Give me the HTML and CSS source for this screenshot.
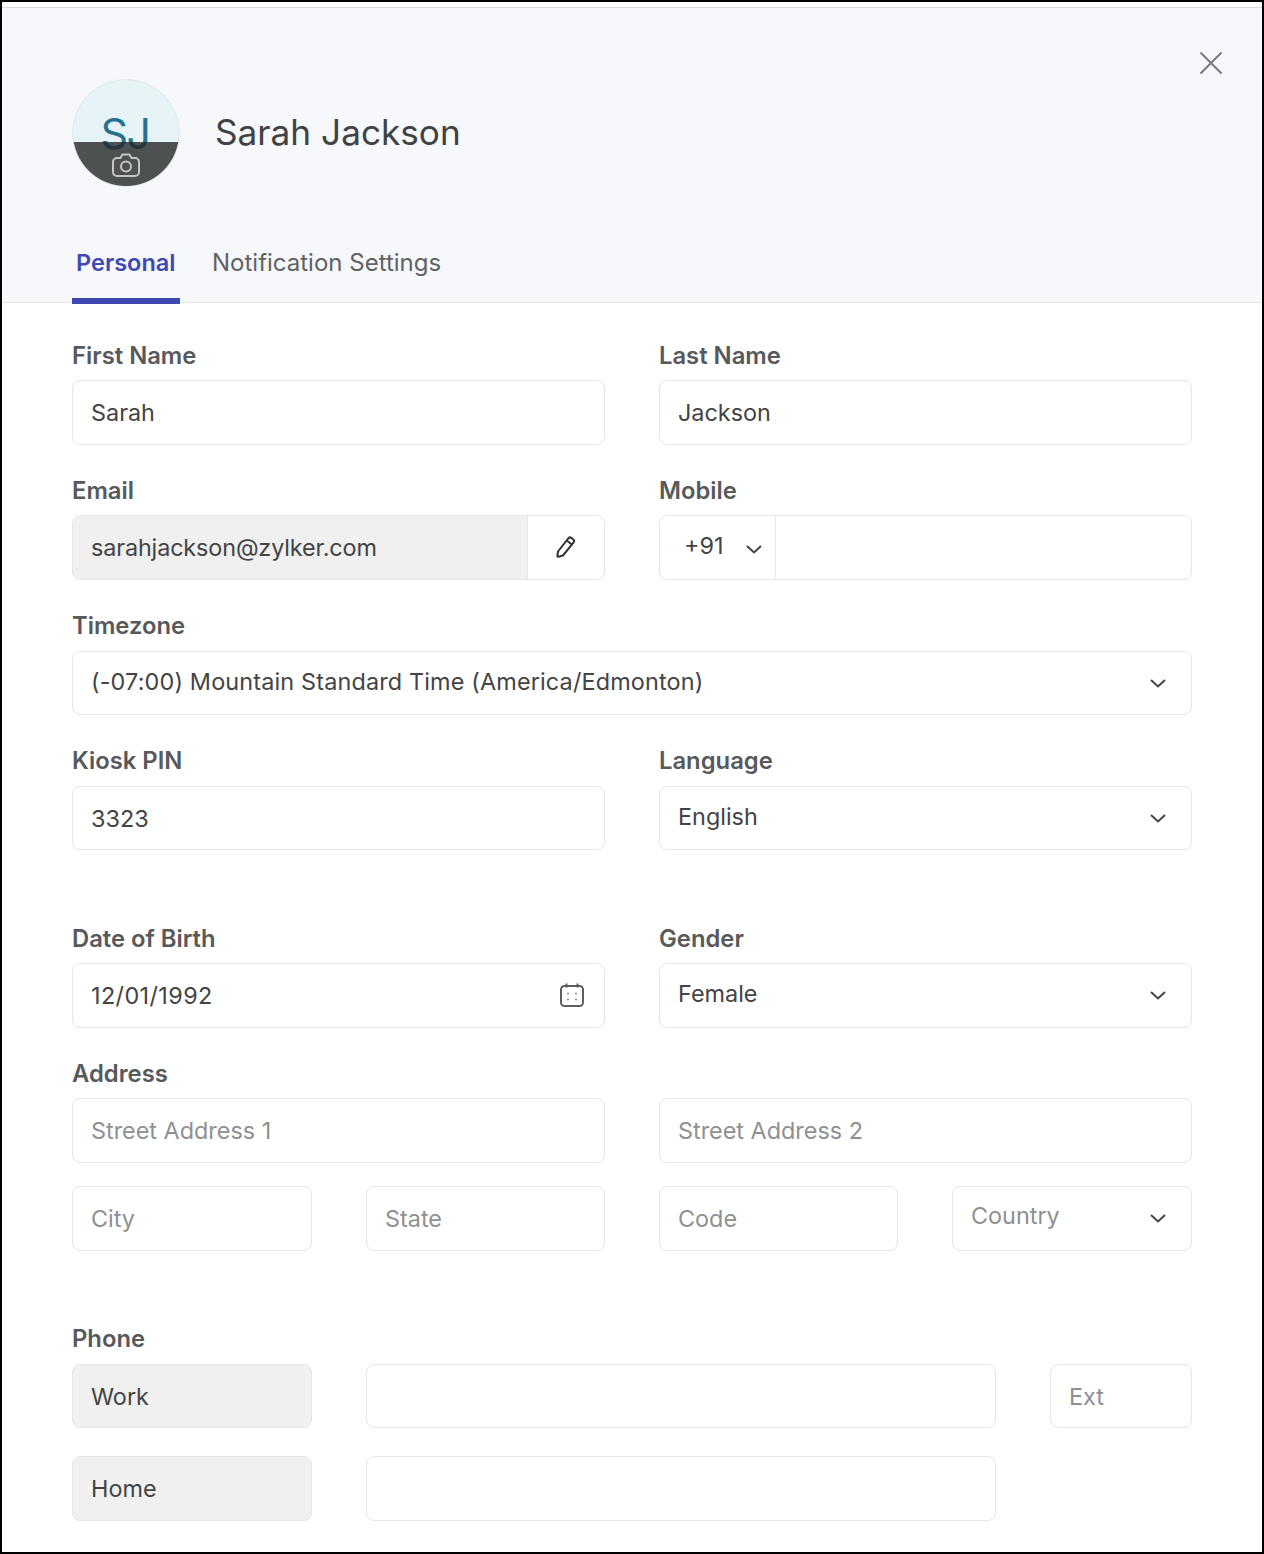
FILE: index.html
```html
<!DOCTYPE html>
<html lang="en">
<head>
<meta charset="utf-8">
<title>Sarah Jackson</title>
<link rel="stylesheet" href="styles.css">
</head>
<body>
<div class="frame">
  <header class="head">
    <button class="close" aria-label="Close"><svg width="24" height="24" viewBox="0 0 24 24"><path d="M1.500 1.500l21 21M22.500 1.500l-21 21" stroke="#777a7d" stroke-width="2" fill="none"/></svg></button>
    <div class="who">
      <div class="avatar">
        <span class="initials">SJ</span>
        <div class="shade">
          <svg width="28" height="24" viewBox="0 0 28 24" fill="none" stroke="#c4c6c6" stroke-width="2"><path d="M5 5h3.500l2-3.500h7l2 3.500H23a4 4 0 0 1 4 4v10a4 4 0 0 1-4 4H5a4 4 0 0 1-4-4V9a4 4 0 0 1 4-4z" stroke-linejoin="round"/><circle cx="14" cy="13.500" r="5"/></svg>
        </div>
      </div>
      <h1 class="name">Sarah Jackson</h1>
    </div>
    <nav class="tabs">
      <div class="tab active">Personal</div>
      <div class="tab">Notification Settings</div>
    </nav>
  </header>

  <main class="form">
    <div class="row two">
      <div><div class="label">First Name</div><div class="box">Sarah</div></div>
      <div><div class="label">Last Name</div><div class="box">Jackson</div></div>
    </div>
    <div class="row two">
      <div><div class="label">Email</div>
        <div class="box split">
          <div class="ro">sarahjackson@zylker.com</div>
          <div class="edit"><svg width="22" height="24" viewBox="0 0 22 24" fill="none" stroke="#333" stroke-width="2" stroke-linejoin="round"><path d="M3 16.500L13.500 3.200a2 2 0 0 1 2.800-.3l2 1.600a2 2 0 0 1 .3 2.800L8 20.500l-4.600 1.300a.8.8 0 0 1-1-.8zM11.800 5.500l5 4"/></svg></div>
        </div>
      </div>
      <div><div class="label">Mobile</div>
        <div class="box split">
          <div class="code">+91<svg class="chev" width="18" height="10" viewBox="0 0 18 10"><path d="M2 2l7 6.500 7-6.500" fill="none" stroke="#444" stroke-width="2"/></svg></div>
          <div class="num"></div>
        </div>
      </div>
    </div>
    <div class="row">
      <div class="label">Timezone</div>
      <div class="box select"><span class="tz">(-07:00) Mountain Standard Time (America/Edmonton)</span><svg class="chev" width="18" height="10" viewBox="0 0 18 10"><path d="M2 2l7 6.500 7-6.500" fill="none" stroke="#444" stroke-width="2"/></svg></div>
    </div>
    <div class="row two">
      <div><div class="label">Kiosk PIN</div><div class="box">3323</div></div>
      <div><div class="label">Language</div><div class="box select"><span>English</span><svg class="chev" width="18" height="10" viewBox="0 0 18 10"><path d="M2 2l7 6.500 7-6.500" fill="none" stroke="#444" stroke-width="2"/></svg></div></div>
    </div>
    <div class="row two wide-gap">
      <div><div class="label">Date of Birth</div>
        <div class="box select"><span class="low">12/01/1992</span>
          <svg class="cal" width="26" height="26" viewBox="0 0 26 26" fill="none" stroke="#5b5f62" stroke-width="2"><rect x="2" y="4" width="22" height="20" rx="3.500"/><path d="M7.500 1.500v4M18.500 1.500v4"/><path d="M8.300 11.500h1.400M16.300 11.500h1.400M8.300 17.500h1.400M16.300 17.500h1.400" stroke-width="1.600"/></svg>
        </div>
      </div>
      <div><div class="label">Gender</div><div class="box select"><span>Female</span><svg class="chev" width="18" height="10" viewBox="0 0 18 10"><path d="M2 2l7 6.500 7-6.500" fill="none" stroke="#444" stroke-width="2"/></svg></div></div>
    </div>
    <div class="row">
      <div class="label">Address</div>
      <div class="two">
        <div class="box ph">Street Address 1</div>
        <div class="box ph">Street Address 2</div>
      </div>
      <div class="four">
        <div class="box ph">City</div>
        <div class="box ph">State</div>
        <div class="box ph">Code</div>
        <div class="box ph select"><span>Country</span><svg class="chev" width="18" height="10" viewBox="0 0 18 10"><path d="M2 2l7 6.500 7-6.500" fill="none" stroke="#444" stroke-width="2"/></svg></div>
      </div>
    </div>
    <div class="row phone">
      <div class="label">Phone</div>
      <div class="phone-grid">
        <div class="box ro-box">Work</div>
        <div class="box"></div>
        <div class="box ph">Ext</div>
      </div>
      <div class="phone-grid second">
        <div class="box ro-box">Home</div>
        <div class="box"></div>
      </div>
    </div>
  </main>
</div>
</body>
</html>
```
FILE: styles.css
```css
* { box-sizing: border-box; }
html, body { margin: 0; padding: 0; background: #fff; }
body {
  font-family: Inter, "Liberation Sans", sans-serif;
  color: #444;
  font-size: 24px;
}
.frame {
  width: 1264px;
  height: 1554px;
  border: 2px solid #000;
  padding-top: 5px;
  overflow: hidden;
}
.head {
  position: relative;
  height: 296px;
  background: #f7f8fc;
  border-top: 1px solid #d9d9d9;
  border-bottom: 1px solid #e6e7e9;
  padding: 71px 70px 0;
}
.close {
  position: absolute;
  top: 43px;
  right: 39px;
  width: 24px;
  height: 24px;
  padding: 0;
  border: 0;
  background: none;
  display: block;
}
.close svg { display: block; }
.who { display: flex; align-items: center; gap: 35px; }
.avatar {
  position: relative;
  width: 108px;
  height: 108px;
  border-radius: 50%;
  background: #e6f4f8;
  border: 1px solid #dfe9ea;
  overflow: hidden;
  display: flex;
  align-items: center;
  justify-content: center;
}
.initials { font-size: 43px; color: #26718f; line-height: 1; letter-spacing: -1.500px; margin-left: -2px; }
.shade {
  position: absolute;
  left: 0; right: 0; bottom: 0;
  height: 44px;
  background: rgba(40, 40, 40, .8);
  display: flex;
  justify-content: center;
  padding-top: 11px;
}
.shade svg { display: block; }
.name { margin: -2px 0 0; font-size: 35.200px; font-weight: 400; color: #404244; line-height: 44px; }
.tabs { display: flex; gap: 24px; margin-top: 49px; }
.tab {
  height: 68px;
  padding: 11px 4px 0;
  line-height: 32px;
  color: #5f6163;
  font-size: 24px;
}
.tab.active {
  width: 108px;
  color: #4048b2;
  font-weight: 600;
  font-size: 23.500px;
  border-bottom: 6px solid #4048b2;
  margin-right: 4px;
  white-space: nowrap;
}
.form { padding: 41.500px 70px 0; }
.row { margin-bottom: 35.300px; }
.two { display: grid; grid-template-columns: 533px 533px; column-gap: 54px; }
.wide-gap { margin-top: 77.200px; }
.label {
  height: 24px;
  line-height: 22.500px;
  margin-bottom: 11.500px;
  font-weight: 600;
  font-size: 23.800px;
  color: #58595b;
}
.box {
  height: 64.500px;
  border: 1px solid #e6e6e6;
  border-radius: 8px;
  background: #fff;
  padding: .5px 18px 0;
  display: flex;
  align-items: center;
  color: #444;
  font-size: 23.400px;
}
.split { padding: 0; overflow: hidden; }
.ro {
  width: 455px;
  align-self: stretch;
  background: #f0f0f0;
  border-right: 1px solid #e6e6e6;
  padding: 0 0 0 18px;
  display: flex;
  align-items: center;
  letter-spacing: -.13px;
}
.edit { flex: 1; display: flex; justify-content: center; }
.edit svg { display: block; margin-top: -2px; }
.code {
  width: 116px;
  align-self: stretch;
  border-right: 1px solid #e6e6e6;
  padding-left: 24px;
  padding-bottom: 5px;
  display: flex;
  align-items: center;
  gap: 21px;
}
.code .chev { margin-top: 7px; }
.num { flex: 1; }
.select { justify-content: space-between; padding: 0 24px 0 18px; }
.select > span { margin-top: -3px; }
.select > span.low { margin-top: 0; letter-spacing: .4px; }
.select > span.tz { margin-top: -2px; letter-spacing: .16px; }
.cal { margin-right: -5px; display: block; }
.chev { display: block; flex: none; }
.ph { color: #8f9092; }
.ph.select > span { margin-top: -5px; }
.four {
  display: grid;
  grid-template-columns: 240px 239px 239px 240px;
  column-gap: 54px;
  margin-top: 23.300px;
}
.phone { margin-top: 77.600px; }
.phone-grid {
  display: grid;
  grid-template-columns: 240px 630px 142px;
  column-gap: 54px;
}
.second { margin-top: 27.900px; }
.ro-box { background: #f0f0f0; }
```
